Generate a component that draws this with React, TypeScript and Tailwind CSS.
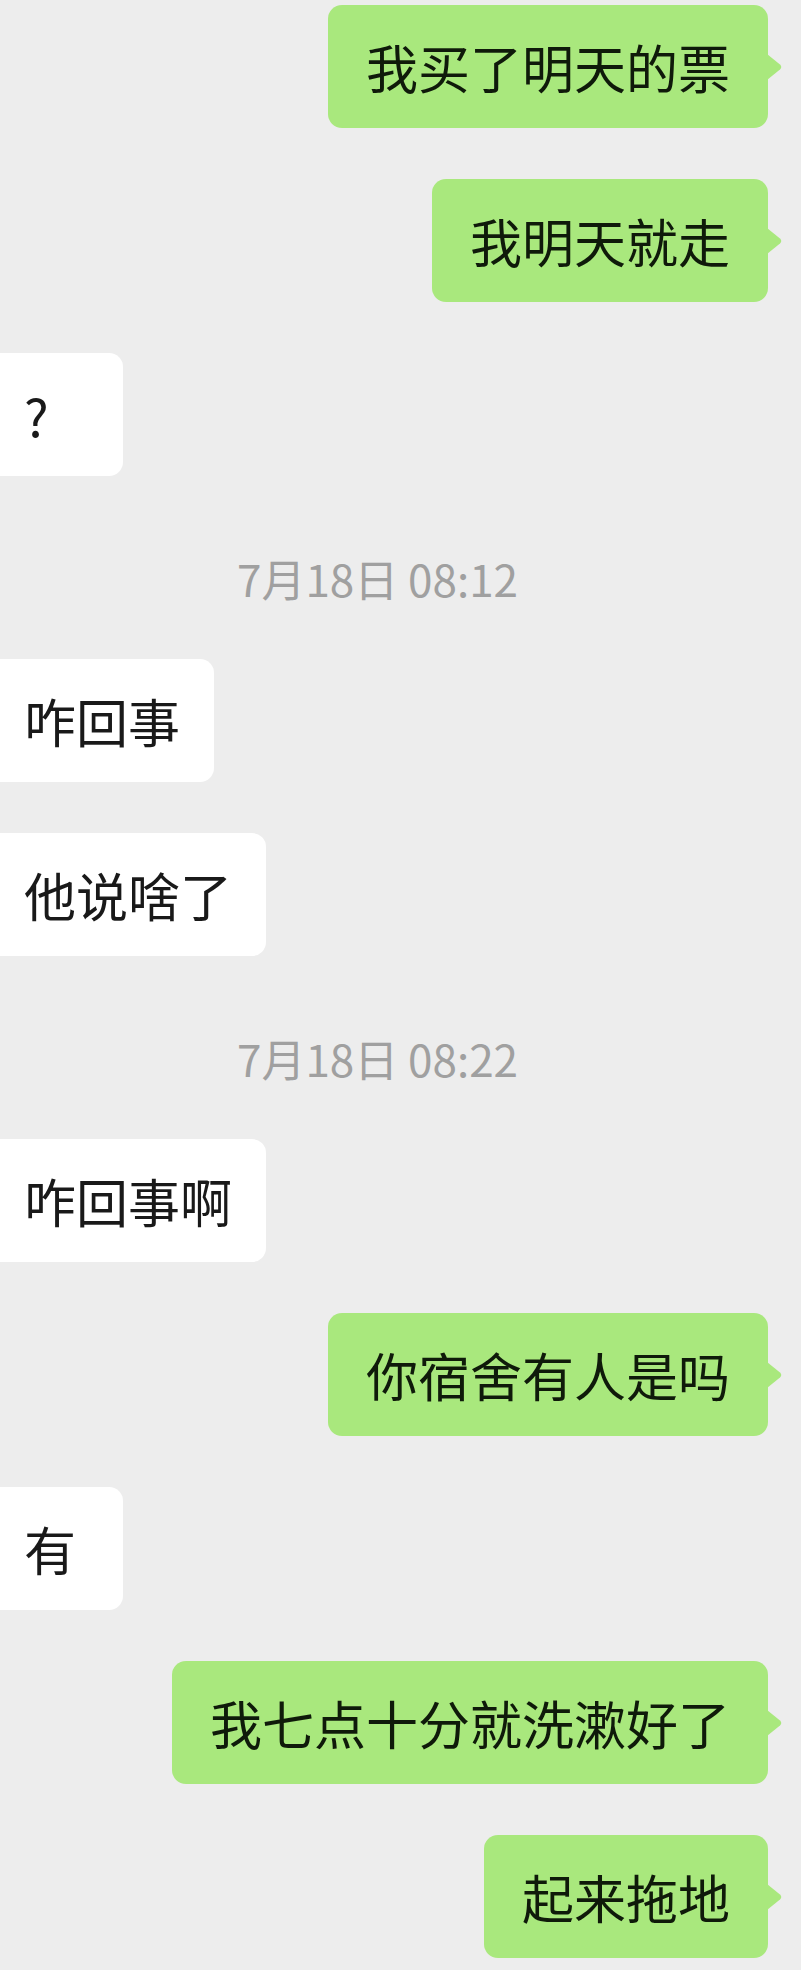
const messages: Array<
  { kind: "me" | "them"; text: string } | { kind: "time"; text: string }
> = [
  { kind: "me", text: "我买了明天的票" },
  { kind: "me", text: "我明天就走" },
  { kind: "them", text: "?" },
  { kind: "time", text: "7月18日 08:12" },
  { kind: "them", text: "咋回事" },
  { kind: "them", text: "他说啥了" },
  { kind: "time", text: "7月18日 08:22" },
  { kind: "them", text: "咋回事啊" },
  { kind: "me", text: "你宿舍有人是吗" },
  { kind: "them", text: "有" },
  { kind: "me", text: "我七点十分就洗漱好了" },
  { kind: "me", text: "起来拖地" },
];

const MyBubble = ({ text }: { text: string }) => (
  <div className="flex justify-end pr-[33px]">
    <div className="relative flex h-[123px] items-center rounded-[14px] bg-[#a9e87d] px-[38px] text-[52px] text-[#0f1a0a]">
      {text}
      <svg
        className="absolute right-[-15px] top-1/2 -translate-y-1/2"
        width="16"
        height="26"
        viewBox="0 0 16 26"
      >
        <path d="M0 0 L13 10.5 Q15.5 13 13 15.5 L0 26 Z" fill="#a9e87d" />
      </svg>
    </div>
  </div>
);

const TheirBubble = ({ text }: { text: string }) => (
  <div className="flex justify-start">
    <div className="flex h-[123px] min-w-[123px] items-center rounded-r-[14px] bg-white pl-[24px] pr-[34px] text-[52px] text-[#191919]">
      {text}
    </div>
  </div>
);

export default function App() {
  return (
    <div className="h-[1970px] w-[801px] overflow-hidden bg-[#ededed] font-['Noto_Sans_CJK_SC',sans-serif] leading-none">
      <div className="flex flex-col gap-[51px] pt-[5px]">
        {messages.map((m, i) =>
          m.kind === "time" ? (
            <div
              key={i}
              className="mt-[21px] flex h-[60px] items-center justify-center pr-[46px] text-[44px] text-[#a0a0a0]"
            >
              {m.text}
            </div>
          ) : m.kind === "me" ? (
            <MyBubble key={i} text={m.text} />
          ) : (
            <TheirBubble key={i} text={m.text} />
          )
        )}
      </div>
    </div>
  );
}
